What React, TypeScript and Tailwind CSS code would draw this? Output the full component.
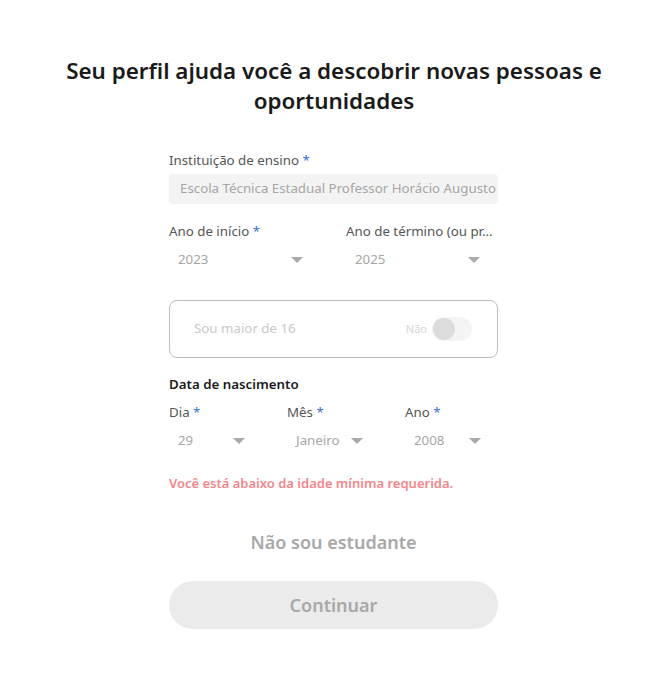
import React from "react";

const Arrow = () => (
  <svg width="12" height="6" viewBox="0 0 12 6" className="shrink-0">
    <path d="M0 0 L12 0 L6 6 Z" fill="#aaaaaa" />
  </svg>
);

const Select = ({ value, pad = "pr-[16px]" }: { value: string; pad?: string }) => (
  <div className={`flex items-center justify-between h-[30px] pl-[9px] ${pad}`}>
    <span className="text-[13.3px] text-[#a6a6a6]">{value}</span>
    <Arrow />
  </div>
);

const Label = ({ text, star = true }: { text: string; star?: boolean }) => (
  <div className="text-[13.3px] leading-[20px] text-[#555] whitespace-nowrap overflow-hidden text-ellipsis">
    {text}
    {star && <span className="text-[#3b6fd6]"> *</span>}
  </div>
);

export default function App() {
  return (
    <div
      className="w-[668px] h-[692px] bg-white flex flex-col items-center"
      style={{ fontFamily: '"Noto Sans", "Open Sans", sans-serif' }}
    >
      <h1 className="mt-[56px] w-[570px] text-center text-[22.4px] leading-[30px] font-semibold text-[#1a1a1a]">
        Seu perfil ajuda você a descobrir novas pessoas e oportunidades
      </h1>

      <div className="w-[329px] mr-[1px] mt-[34px] flex flex-col">
        <Label text="Instituição de ensino" />
        <div className="mt-[4px] h-[30px] rounded-[4px] bg-[#f3f3f3] flex items-center pl-[11px] overflow-hidden">
          <span className="text-[13.3px] text-[#a6a6a6] whitespace-nowrap">
            Escola Técnica Estadual Professor Horácio Augusto
          </span>
        </div>

        <div className="mt-[17px] flex gap-[26px]">
          <div className="w-[151px] flex flex-col">
            <Label text="Ano de início" />
            <div className="mt-[4px]">
              <Select value="2023" pad="pr-[17px]" />
            </div>
          </div>
          <div className="w-[151px] flex flex-col">
            <div className="text-[13.3px] leading-[20px] text-[#555] whitespace-nowrap">
              Ano de término (ou pr...
            </div>
            <div className="mt-[4px]">
              <Select value="2025" pad="pr-[17px]" />
            </div>
          </div>
        </div>

        <div className="mt-[25px] h-[58px] rounded-[8px] border border-[#bdbdbd] flex items-center pl-[24px] pr-[25px]">
          <span className="text-[13.3px] text-[#c9c9c9] flex-1">Sou maior de 16</span>
          <span className="text-[11px] text-[#d6d6d6] mr-[5px]">Não</span>
          <div className="w-[40px] h-[24px] rounded-full bg-[#f4f4f4] flex items-center pl-[1px]">
            <div className="w-[22px] h-[22px] rounded-full bg-[#dcdcdc]" />
          </div>
        </div>

        <div className="mt-[16px] text-[13.3px] leading-[20px] font-semibold text-[#1a1a1a]">
          Data de nascimento
        </div>
        <div className="mt-[8px] flex gap-[26px]">
          <div className="w-[92px] flex flex-col">
            <Label text="Dia" />
            <div className="mt-[4px]">
              <Select value="29" />
            </div>
          </div>
          <div className="w-[92px] flex flex-col">
            <Label text="Mês" />
            <div className="mt-[4px]">
              <Select value="Janeiro" pad="pr-[16px]" />
            </div>
          </div>
          <div className="w-[92px] flex flex-col">
            <Label text="Ano" />
            <div className="mt-[4px]">
              <Select value="2008" />
            </div>
          </div>
        </div>

        <div className="mt-[17px] text-[13px] leading-[20px] font-semibold text-[#f2868a]">
          Você está abaixo da idade mínima requerida.
        </div>

        <div className="mt-[37px] text-center text-[18px] leading-[24px] font-semibold text-[#a8a8a8]">
          Não sou estudante
        </div>

        <button className="mt-[27px] h-[48px] w-full rounded-full bg-[#ebebeb] text-[18px] font-semibold text-[#a8a8a8]">
          Continuar
        </button>
      </div>
    </div>
  );
}
